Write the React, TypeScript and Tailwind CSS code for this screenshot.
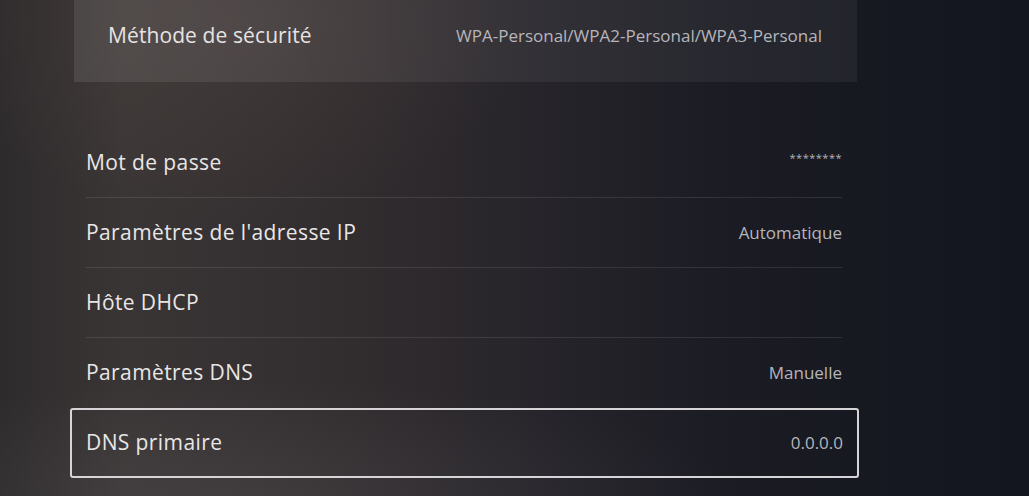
const rows = [
  { label: 'Mot de passe', value: '********', stars: true },
  { label: "Paramètres de l'adresse IP", value: 'Automatique' },
  { label: 'Hôte DHCP', value: '' },
  { label: 'Paramètres DNS', value: 'Manuelle' },
];

export default function App() {
  return (
    <div
      className="w-[1029px] h-[496px] overflow-hidden bg-[radial-gradient(ellipse_300px_200px_at_230px_20px,rgba(150,120,110,0.12),transparent),radial-gradient(ellipse_500px_120px_at_250px_500px,rgba(200,200,210,0.08),transparent),linear-gradient(90deg,#2e2b2c_0%,#3a3535_12%,#312c2e_35%,#25232a_55%,#1a1b23_72%,#13161f_100%)] font-['Open_Sans','Noto_Sans',sans-serif]"
    >
      <div className="w-[786px] ml-[71px]">
        {/* selected security method card */}
        <div className="h-[82px] ml-[3px] w-[783px] flex items-center justify-between pl-[34px] pr-[35px] bg-[linear-gradient(90deg,rgba(255,255,255,0.09),rgba(255,255,255,0.06)_50%,rgba(255,255,255,0.05))]">
          <span className="text-[21px] tracking-[0.1px] text-[#e6e3e3] -mt-[10px]">Méthode de sécurité</span>
          <span className="text-[17px] text-[#b6b5ba] -mt-[10px]">WPA-Personal/WPA2-Personal/WPA3-Personal</span>
        </div>

        <div className="mt-[46px]">
          {rows.map((row, i) => (
            <div
              key={row.label}
              className={
                'h-[70px] mx-[15px] flex items-center justify-between ' +
                (i < 3 ? 'border-b border-[#ffffff1a]' : '')
              }
            >
              <span className="text-[21px] tracking-[0.4px] text-[#e8e6e6]">{row.label}</span>
              {row.stars ? (
                <span className="text-[11px] tracking-[0.5px] text-[#b6b5ba] -mt-[8px]">{row.value}</span>
              ) : (
                <span className="text-[17px] text-[#b6b5ba]">{row.value}</span>
              )}
            </div>
          ))}

          {/* focused row */}
          <div className="h-[70px] -ml-[1px] w-[789px] border-2 border-[#d6d4d6] rounded-[3px] flex items-center justify-between pl-[14px] pr-[14px]">
            <span className="text-[21px] tracking-[0.4px] text-[#e8e6e6]">DNS primaire</span>
            <span className="text-[17px] text-[#b6b5ba]">0.0.0.0</span>
          </div>
        </div>
      </div>
    </div>
  );
}
